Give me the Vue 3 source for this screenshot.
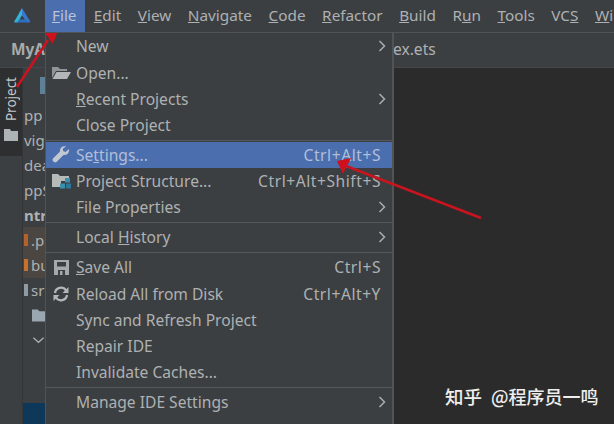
<script setup>
// 菜单栏
const menus = [
  { u: "F", rest: "ile", active: true },
  { u: "E", rest: "dit" },
  { u: "V", rest: "iew" },
  { u: "N", rest: "avigate" },
  { u: "C", rest: "ode" },
  { u: "R", rest: "efactor" },
  { u: "B", rest: "uild" },
  { pre: "R", u: "u", rest: "n" },
  { u: "T", rest: "ools" },
  { pre: "VC", u: "S", rest: "" },
  { u: "W", rest: "indow" },
];

// File 菜单项 type: item / sep
const items = [
  { pre: "New", arrow: true },
  { pre: "Open...", icon: "open" },
  { u: "R", rest: "ecent Projects", arrow: true },
  { pre: "Close Project" },
  { sep: true },
  { pre: "Se", u: "t", rest: "tings...", icon: "wrench", key: "Ctrl+Alt+S", active: true },
  { pre: "Project Structure...", icon: "struct", key: "Ctrl+Alt+Shift+S" },
  { pre: "File Properties", arrow: true },
  { sep: true },
  { pre: "Local ", u: "H", rest: "istory", arrow: true },
  { sep: true },
  { u: "S", rest: "ave All", icon: "save", key: "Ctrl+S" },
  { pre: "Reload All from Disk", icon: "reload", key: "Ctrl+Alt+Y" },
  { pre: "Sync and Refresh Project" },
  { pre: "Repair IDE" },
  { pre: "Invalidate Caches..." },
  { sep: true },
  { pre: "Manage IDE Settings", arrow: true },
  { pre: "New Projects Settings", arrow: true, last: true },
];

// 左侧被菜单遮住后露出的文件树
const tree = [
  { text: "pp" },
  { text: "vig" },
  { text: "dea" },
  { text: "ppS" },
  { text: "ntry", bold: true },
  { text: ".p", mark: "#b4622d", sel: true },
  { text: "bu", mark: "#c8702d", sel: true },
  { text: "sr", mark: "#8f9aa3" },
];
</script>

<template>
  <div class="page">
    <header class="menubar">
      <svg class="logo" width="20" height="17" viewBox="0 0 20 17">
        <path d="M10 6 L14 13 L5 15.5 L2 15.5 Z" fill="#2a86b8" />
        <path d="M10 1 L2 15 L6 15.5 L10 8 Z" fill="#35b3d6" />
        <path d="M10 1 L18.5 15 L14.5 15.5 L10 8 Z" fill="#3a78d0" />
        <path d="M4 15.5 L8 12.5 L15 12.5 L17 15.5 Z" fill="#2c6fc0" />
        <path d="M10 8.5 L13 12.5 L7.5 12.5 Z" fill="#3c3f41" />
      </svg>
      <nav class="menus">
        <span v-for="m in menus" :key="m.u + m.rest" class="menu" :class="{ on: m.active }">{{ m.pre }}<u>{{ m.u }}</u>{{ m.rest }}</span>
      </nav>
    </header>

    <div class="tabbar">
      <b class="crumb">MyA</b>
      <span class="tabname">ex.ets</span>
    </div>

    <div class="main">
      <aside class="strip">
        <div class="stripBtn">
          <span class="stripText">Project</span>
          <svg width="14" height="12" viewBox="0 0 14 12"><path d="M0 0 H6 L7 2 H14 V12 H0 Z" fill="#aeb3b6" /></svg>
        </div>
      </aside>
      <section class="tree">
        <div class="treeTool"><i class="toolIcon"></i></div>
        <div v-for="t in tree" :key="t.text" class="row" :class="{ bold: t.bold, sel: t.sel }">
          <i v-if="t.mark" class="mark" :style="{ background: t.mark }"></i>{{ t.text }}
        </div>
        <div class="row iconRow">
          <svg width="14" height="13" viewBox="0 0 14 13"><path d="M0 0 H6 L8 2 H14 V13 H0 Z" fill="#9aa7b1" /></svg>
        </div>
        <div class="row iconRow">
          <svg width="14" height="8" viewBox="0 0 14 8"><path d="M1.5 1.5 L7 6.5 L12.5 1.5" fill="none" stroke="#a9b0b5" stroke-width="1.4" /></svg>
        </div>
        <div class="blueRow"></div>
      </section>
      <section class="editor"></section>
    </div>

    <!-- File 下拉菜单 -->
    <div class="dropdown">
      <template v-for="(it, i) in items" :key="i">
        <div v-if="it.sep" class="sep"></div>
        <div v-else class="item" :class="{ active: it.active, last: it.last }">
          <span class="ico">
            <svg v-if="it.icon === 'open'" width="19" height="13" viewBox="0 0 19 13">
              <path d="M0 1 H6 L8 3 H15 V5 H4 L0 12 Z" fill="#8f9497" />
              <path d="M4.5 6 H19 L15 13 H0.5 Z" fill="#b4b7b9" />
            </svg>
            <svg v-else-if="it.icon === 'wrench'" width="18" height="18" viewBox="0 0 18 18">
              <path d="M17 3 L13.5 6 L11 5 L11 2.5 L14 0.5 C10.5 -0.5 7.5 2 8 5.5 L1 12.5 C-0.5 14.5 2 17.5 4.5 16 L11.5 9 C15 9.5 17.5 7 17 3 Z" fill="#c2c8d2" />
            </svg>
            <svg v-else-if="it.icon === 'struct'" width="19" height="17" viewBox="0 0 19 17">
              <path d="M0 1 H6 L8 3 H17 V8 H9 V14 H0 Z" fill="#b6bab8" />
              <rect x="13" y="5" width="5" height="4.5" fill="#3d8fae" />
              <rect x="8" y="10.5" width="5" height="5" fill="#3d8fae" />
              <rect x="14" y="10.5" width="5" height="5" fill="#2f7796" />
            </svg>
            <svg v-else-if="it.icon === 'save'" width="15" height="15" viewBox="0 0 15 15">
              <path d="M0 0 H15 V15 H0 Z" fill="#a5a9ac" />
              <rect x="3" y="2" width="9" height="4.5" fill="#3c3f41" />
              <rect x="4" y="10" width="7" height="5" fill="#3c3f41" />
              <rect x="6" y="11" width="2.5" height="4" fill="#a5a9ac" />
            </svg>
            <svg v-else-if="it.icon === 'reload'" width="16" height="16" viewBox="0 0 16 16">
              <path d="M2 7 A6 6 0 0 1 13 4.5" fill="none" stroke="#b4b7b9" stroke-width="2.2" />
              <path d="M14 9 A6 6 0 0 1 3 11.5" fill="none" stroke="#b4b7b9" stroke-width="2.2" />
              <path d="M15.5 1 V7 H9.5 Z M0.5 15 V9 H6.5 Z" fill="#b4b7b9" />
            </svg>
          </span>
          <span class="label">{{ it.pre }}<u v-if="it.u">{{ it.u }}</u>{{ it.rest }}</span>
          <span v-if="it.key" class="key">{{ it.key }}</span>
          <svg v-if="it.arrow" class="more" width="8" height="12" viewBox="0 0 8 12"><path d="M1.5 1 L6.5 6 L1.5 11" fill="none" stroke="#a9adb0" stroke-width="1.5" /></svg>
        </div>
      </template>
    </div>

    <div class="mark-text"><span class="zhihu">知乎</span><span class="author">@程序员一鸣</span></div>

    <!-- 标注箭头 -->
    <svg class="notes" width="614" height="424" viewBox="0 0 614 424">
      <path d="M17 87 L48 40" stroke="#c8141f" stroke-width="2.6" />
      <path d="M45 33 L57 33 L53 44 Z" fill="#d0101c" />
      <path d="M481 218 L346 166" stroke="#c8141f" stroke-width="2.6" />
      <path d="M337 161 L351 158 L343 174 Z" fill="#d0101c" />
    </svg>
  </div>
</template>

<style scoped>
.page {
  position: relative;
  width: 614px;
  height: 424px;
  overflow: hidden;
  background: #2b2b2b;
  color: #aeb1b3;
  font-family: "Noto Sans", "Noto Sans CJK SC", sans-serif;
  font-size: 15px;
}

.menubar {
  display: flex;
  height: 32px;
  background: #3c3f41;
  border-bottom: 1px solid #515456;
}
.logo {
  flex: none;
  margin: 7px 0 0 12px;
}
.menus {
  display: flex;
  flex: none;
  margin-left: 13px;
  white-space: nowrap;
  font-size: 15.3px;
}
.menu {
  padding: 0 8.3px;
  line-height: 31px;
}
.menu.on {
  background: #4b6eaf;
  padding: 0 9px 0 7px;
  color: #b9c4d8;
}

.tabbar {
  display: flex;
  align-items: center;
  height: 35px;
  padding-bottom: 2px;
  box-sizing: border-box;
  background: #3c3f41;
  border-bottom: 1px solid #45484a;
}
.crumb {
  margin-left: 11px;
  color: #a8abad;
  font-size: 15.4px;
}
.tabname {
  margin-left: 348px;
  font-size: 15.6px;
}

.main {
  display: flex;
  height: 356px;
}
.strip {
  flex: none;
  width: 23px;
  background: #3c3f41;
  border-right: 1px solid #323436;
  box-sizing: border-box;
}
.stripBtn {
  display: flex;
  flex-direction: column;
  align-items: center;
  gap: 8px;
  height: 88px;
  background: #2d2f31;
  font-size: 13.5px;
  color: #c4c7c9;
}
.stripText {
  writing-mode: vertical-rl;
  transform: rotate(180deg);
  line-height: 23px;
  margin-top: 9px;
}

.tree {
  flex: none;
  width: 22px;
  overflow: hidden;
  background: #3c3f41;
  white-space: nowrap;
}
.treeTool {
  height: 34px;
  padding-top: 9px;
  box-sizing: border-box;
}
.toolIcon {
  display: block;
  width: 5px;
  height: 17px;
  margin-left: 17px;
  background: #5f8197;
}
.row {
  display: flex;
  align-items: center;
  gap: 3px;
  height: 25.1px;
  padding-left: 1px;
}
.row.bold {
  font-weight: 700;
}
.row.sel {
  background: #4b4641;
}
.mark {
  width: 4px;
  height: 12px;
  flex: none;
}
.iconRow {
  padding-left: 9px;
}
.blueRow {
  height: 21px;
  margin-top: 50px;
  background: #0d385a;
}

.editor {
  flex: 1;
  background: #2b2b2b;
}

.dropdown {
  position: absolute;
  left: 45px;
  top: 33px;
  width: 346px;
  height: 400px;
  padding-top: 0.4px;
  background: #3c3f41;
  border-left: 1px solid #515456;
  border-right: 2px solid #515456;
  font-size: 15.6px;
}
.item {
  display: flex;
  align-items: center;
  height: 26.2px;
  padding-right: 11px;
  white-space: nowrap;
}
.item.last {
  margin-top: 3px;
}
.item.active {
  background: #4b6eaf;
  color: #b0bfd9;
}
.ico {
  display: flex;
  justify-content: center;
  align-items: center;
  width: 30px;
  flex: none;
}
.label {
  flex: 1;
}
.key {
  margin-left: 8px;
  letter-spacing: 0.55px;
}
.more {
  margin-right: -5px;
  margin-left: 4px;
}
.sep {
  height: 1px;
  margin: 1.4px 0;
  background: #55585a;
}

.mark-text {
  position: absolute;
  left: 445px;
  top: 383px;
  display: flex;
  gap: 9px;
  color: #eeeeee;
  font-family: "Noto Sans CJK SC", sans-serif;
  font-weight: 500;
  line-height: 26px;
  white-space: nowrap;
}
.zhihu {
  font-size: 18.5px;
}
.author {
  font-size: 18px;
}
.notes {
  position: absolute;
  left: 0;
  top: 0;
  pointer-events: none;
}
</style>
